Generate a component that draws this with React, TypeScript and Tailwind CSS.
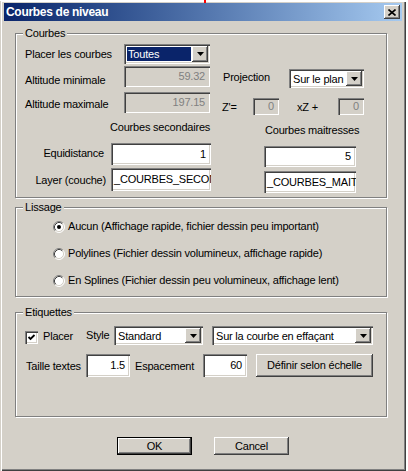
import React from "react";

const sunkenW =
  "bg-white shadow-[inset_1px_1px_0_#808080,inset_2px_2px_0_#404040,inset_-1px_-1px_0_#ffffff,inset_-2px_-2px_0_#d4d0c8]";
const sunkenG =
  "bg-[#d4d0c8] shadow-[inset_1px_1px_0_#808080,inset_2px_2px_0_#404040,inset_-1px_-1px_0_#ffffff,inset_-2px_-2px_0_#d4d0c8]";
const raised =
  "bg-[#d4d0c8] shadow-[inset_-1px_-1px_0_#404040,inset_1px_1px_0_#ffffff,inset_-2px_-2px_0_#808080,inset_2px_2px_0_#d4d0c8]";

function Arrow() {
  return (
    <svg width="7" height="4" viewBox="0 0 7 4">
      <polygon points="0,0 7,0 3.5,4" fill="#000" />
    </svg>
  );
}

function Combo({
  w,
  h,
  text,
  selected,
}: {
  w: string;
  h: string;
  text: string;
  selected?: boolean;
}) {
  return (
    <div className={`${sunkenW} ${w} ${h} flex p-[2px] shrink-0`}>
      <div className="flex-1 flex items-center pl-[1px] pr-[1px] min-w-0">
        <div
          className={`leading-[14px] px-[1px] w-full whitespace-nowrap overflow-hidden ${
            selected ? "bg-[#0a246a] text-white" : "text-black"
          }`}
        >
          {text}
        </div>
      </div>
      <div className={`${raised} w-[16px] h-full flex items-center justify-center shrink-0`}>
        <Arrow />
      </div>
    </div>
  );
}

function Field({
  w,
  h,
  text,
  disabled,
  left,
  extra,
}: {
  w: string;
  h: string;
  text: string;
  disabled?: boolean;
  left?: boolean;
  extra?: string;
}) {
  return (
    <div
      className={`${disabled ? sunkenG : sunkenW} ${w} ${h} ${extra ?? ""} shrink-0 flex items-center overflow-hidden ${
        left ? "justify-start pl-[3px]" : "justify-end pr-[5px]"
      }`}
    >
      <span
        className={`whitespace-nowrap leading-[13px] ${
          disabled ? "text-[#808080]" : "text-black"
        }`}
      >
        {text}
      </span>
    </div>
  );
}

function Radio({ checked }: { checked?: boolean }) {
  return (
    <svg width="12" height="12" viewBox="0 0 12 12" className="shrink-0">
      <circle cx="6" cy="6" r="5" fill="#ffffff" />
      <path d="M2.11 9.89 A5.5 5.5 0 0 1 9.89 2.11" stroke="#808080" fill="none" />
      <path d="M9.89 2.11 A5.5 5.5 0 0 1 2.11 9.89" stroke="#ffffff" fill="none" />
      <path d="M2.82 9.18 A4.5 4.5 0 0 1 9.18 2.82" stroke="#404040" fill="none" />
      <path d="M9.18 2.82 A4.5 4.5 0 0 1 2.82 9.18" stroke="#d4d0c8" fill="none" />
      {checked && <circle cx="6" cy="6" r="2" fill="#000" />}
    </svg>
  );
}

function Group({
  label,
  h,
  extra,
  children,
}: {
  label: string;
  h: string;
  extra?: string;
  children: React.ReactNode;
}) {
  return (
    <div
      className={`relative ml-[11px] w-[372px] ${h} ${extra ?? ""} border border-[#808080] shadow-[1px_1px_0_#ffffff,inset_1px_1px_0_#ffffff]`}
    >
      <div className="absolute -top-[7px] left-[7px] px-[2px] bg-[#d4d0c8] leading-[13px]">
        {label}
      </div>
      {children}
    </div>
  );
}

export default function App() {
  return (
    <div className="relative w-[406px] h-[471px] bg-[#d4d0c8] font-['Liberation_Sans',Arial,sans-serif] text-[11px] tracking-[-0.2px] text-black pt-[3px] px-[4px] shadow-[inset_0_1px_0_#ffffff,inset_1px_0_0_#d4d0c8,inset_2px_2px_0_#ffffff,inset_-1px_-1px_0_#404040,inset_-2px_-2px_0_#808080]">
      <div className="absolute left-[204px] top-0 w-[2px] h-[3px] bg-[#ff0000]" />
      {/* Title bar */}
      <div className="h-[18px] bg-linear-to-r from-[#0a246a] to-[#a6caf0] flex items-center pl-[2px] pr-[2px]">
        <span className="text-white font-bold text-[12px] tracking-[-0.3px] leading-[14px] flex-1">
          Courbes de niveau
        </span>
        <div className={`${raised} w-[16px] h-[14px] flex items-center justify-center`}>
          <svg width="8" height="7" viewBox="0 0 8 7">
            <path d="M0.5 0.5 L7.5 6.5 M7.5 0.5 L0.5 6.5" stroke="#000" strokeWidth="1.6" />
          </svg>
        </div>
      </div>

      {/* Courbes */}
      <Group label="Courbes" h="h-[165px]" extra="mt-[12px]">
        <div className="pt-[10px] pl-[9px] flex flex-col">
          {/* Row A */}
          <div className="flex h-[22px] items-start">
            <div className="w-[99px] leading-[20px]">Placer les courbes</div>
            <Combo w="w-[86px]" h="h-[20px]" text="Toutes" selected />
          </div>
          {/* Row B */}
          <div className="flex h-[26px] items-start">
            <div className="w-[99px] mt-[8px] leading-[13px]">Altitude minimale</div>
            <Field w="w-[86px]" h="h-[21px]" text="59.32" disabled />
            <div className="ml-[13px] w-[66px] mt-[5px] leading-[13px]">Projection</div>
            <div className="mt-[3px]">
              <Combo w="w-[75px]" h="h-[19px]" text="Sur le plan" />
            </div>
          </div>
          {/* Row C */}
          <div className="flex h-[29px] items-start">
            <div className="w-[99px] mt-[6px] leading-[13px]">Altitude maximale</div>
            <Field w="w-[86px]" h="h-[21px]" text="197.15" disabled />
            <div className="ml-[12px] w-[31px] mt-[9px] leading-[13px]">Z'=</div>
            <Field w="w-[26px]" h="h-[17px]" text="0" disabled extra="mt-[6px]" />
            <div className="ml-[18px] w-[41px] mt-[9px] leading-[13px]">xZ +</div>
            <Field w="w-[26px]" h="h-[17px]" text="0" disabled extra="mt-[6px]" />
          </div>
          {/* Row D */}
          <div className="flex h-[22px] items-start">
            <div className="ml-[85px] w-[155px] leading-[13px]">Courbes secondaires</div>
            <div className="mt-[3px] leading-[13px]">Courbes maitresses</div>
          </div>
          {/* Row E */}
          <div className="flex h-[25px] items-start">
            <div className="w-[86px] text-right pr-[7px] mt-[4px] leading-[13px]">Equidistance</div>
            <Field w="w-[100px]" h="h-[22px]" text="1" />
            <Field w="w-[92px]" h="h-[21px]" text="5" extra="ml-[53px] mt-[3px]" />
          </div>
          {/* Row F */}
          <div className="flex h-[25px] items-start">
            <div className="w-[86px] text-right pr-[5px] mt-[6px] leading-[13px]">Layer (couche)</div>
            <Field w="w-[100px]" h="h-[23px]" text="_COURBES_SECONDAIRES" left />
            <Field
              w="w-[92px]"
              h="h-[22px]"
              text="_COURBES_MAITRESSES"
              left
              extra="ml-[53px] mt-[3px]"
            />
          </div>
        </div>
      </Group>

      {/* Lissage */}
      <Group label="Lissage" h="h-[90px]" extra="mt-[9px]">
        <div className="pt-[12px] pl-[37px] flex flex-col gap-[14px]">
          <div className="flex items-center h-[13px] gap-[3px]">
            <Radio checked />
            <span className="leading-[13px]">
              Aucun (Affichage rapide, fichier dessin peu important)
            </span>
          </div>
          <div className="flex items-center h-[13px] gap-[3px]">
            <Radio />
            <span className="leading-[13px]">
              Polylines (Fichier dessin volumineux, affichage rapide)
            </span>
          </div>
          <div className="flex items-center h-[13px] gap-[3px]">
            <Radio />
            <span className="leading-[13px]">
              En Splines (Fichier dessin peu volumineux, affichage lent)
            </span>
          </div>
        </div>
      </Group>

      {/* Etiquettes */}
      <Group label="Etiquettes" h="h-[105px]" extra="mt-[15px]">
        <div className="pt-[13px] pl-[9px] flex flex-col">
          <div className="flex items-start h-[19px]">
            <div className={`${sunkenW} w-[13px] h-[13px] mt-[5px] shrink-0 flex items-center justify-center`}>
              <svg width="9" height="9" viewBox="0 0 9 9">
                <path d="M1.5 4 L3.5 6 L7.5 2" stroke="#000" strokeWidth="1.8" fill="none" />
              </svg>
            </div>
            <div className="ml-[5px] w-[43px] mt-[4px] leading-[13px]">Placer</div>
            <div className="w-[28px] mt-[3px] leading-[13px]">Style</div>
            <Combo w="w-[89px]" h="h-[19px]" text="Standard" />
            <div className="ml-[9px]">
              <Combo w="w-[161px]" h="h-[19px]" text="Sur la courbe en effaçant" />
            </div>
          </div>
          <div className="flex items-start h-[23px] mt-[9px]">
            <div className="ml-[1px] w-[60px] mt-[6px] leading-[13px]">Taille textes</div>
            <Field w="w-[44px]" h="h-[23px]" text="1.5" />
            <div className="ml-[5px] w-[68px] mt-[6px] leading-[13px]">Espacement</div>
            <Field w="w-[44px]" h="h-[23px]" text="60" />
            <div
              className={`${raised} ml-[9px] w-[117px] h-[23px] flex items-center justify-center leading-[13px]`}
            >
              Définir selon échelle
            </div>
          </div>
        </div>
      </Group>

      {/* Buttons */}
      <div className="flex mt-[20px]">
        <div className="ml-[113px] w-[75px] h-[18px] border border-black">
          <div className={`${raised} w-full h-full flex items-center justify-center leading-[13px]`}>
            OK
          </div>
        </div>
        <div
          className={`${raised} ml-[22px] w-[75px] h-[18px] flex items-center justify-center leading-[13px]`}
        >
          Cancel
        </div>
      </div>
    </div>
  );
}
